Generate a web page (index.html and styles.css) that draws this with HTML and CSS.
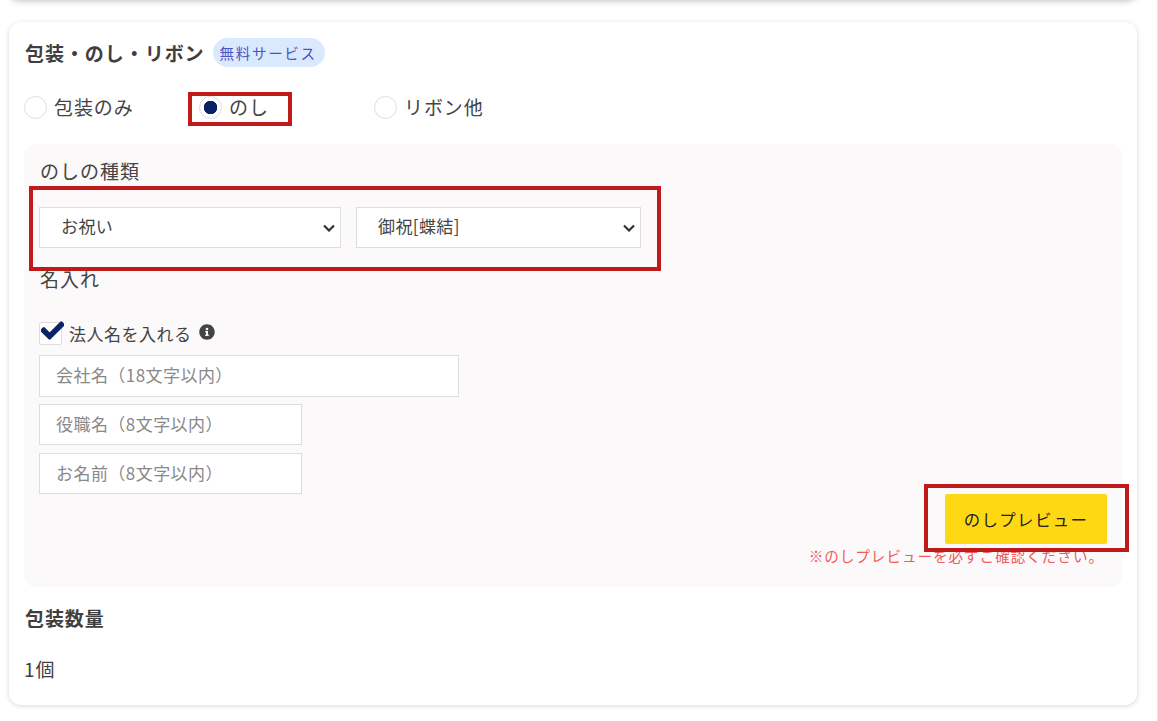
FILE: index.html
```html
<!DOCTYPE html>
<html lang="ja">
<head>
<meta charset="utf-8">
<title>包装・のし・リボン</title>
<link rel="stylesheet" href="styles.css">
</head>
<body>
<div class="prev-card"></div>
<section class="card">
  <div class="title-row">
    <h2 class="title">包装・のし・リボン</h2>
    <span class="badge">無料サービス</span>
  </div>
  <div class="radios">
    <label class="radio r1"><input type="radio" name="wrap"><span>包装のみ</span></label>
    <label class="radio r2"><input type="radio" name="wrap" checked><span>のし</span></label>
    <label class="radio r3"><input type="radio" name="wrap"><span>リボン他</span></label>
  </div>
  <div class="panel">
    <div class="label">のしの種類</div>
    <div class="selects">
      <select class="sel sel-a"><option>お祝い</option></select>
      <select class="sel sel-b"><option>御祝[蝶結]</option></select>
    </div>
    <div class="label name-label">名入れ</div>
    <div class="check-row">
      <span class="check">
        <svg class="tick" viewBox="0 0 512 512"><path d="M173.900 439.400l-166.400-166.400c-10-10-10-26.200 0-36.200l36.200-36.200c10-10 26.200-10 36.200 0L192 312.700 432.100 72.600c10-10 26.200-10 36.200 0l36.200 36.200c10 10 10 26.200 0 36.200l-294.400 294.400c-10 10-26.200 10-36.200 0z"/></svg>
      </span>
      <span class="check-text">法人名を入れる</span>
      <svg class="info" viewBox="0 0 512 512"><path d="M256 8C119 8 8 119 8 256s111 248 248 248 248-111 248-248S393 8 256 8zm0 110c23.200 0 42 18.800 42 42s-18.800 42-42 42-42-18.800-42-42 18.800-42 42-42zm56 254c0 6.600-5.400 12-12 12h-88c-6.600 0-12-5.400-12-12v-24c0-6.600 5.400-12 12-12h12v-64h-12c-6.600 0-12-5.400-12-12v-24c0-6.600 5.400-12 12-12h64c6.600 0 12 5.400 12 12v100h12c6.600 0 12 5.400 12 12v24z"/></svg>
    </div>
    <input class="field field-l" type="text" placeholder="会社名（18文字以内）">
    <input class="field field-s" type="text" placeholder="役職名（8文字以内）">
    <input class="field field-s field-last" type="text" placeholder="お名前（8文字以内）">
    <div class="preview-row">
      <button class="btn" type="button">のしプレビュー</button>
    </div>
    <p class="notice">※のしプレビューを必ずご確認ください。</p>
  </div>
  <h3 class="qty-title">包装数量</h3>
  <p class="qty">1個</p>
</section>
<div class="anno anno-radio"></div>
<div class="anno anno-selects"></div>
<div class="anno anno-btn"></div>
</body>
</html>
```

FILE: styles.css
```css
* { box-sizing: border-box; }
html, body { height: 100%; }
body {
  position: relative;
  margin: 0;
  padding: 0 20px 0 9px;
  background: #fff;
  color: #3f3f3f;
  font-family: "Noto Sans CJK JP", "Noto Sans", sans-serif;
  font-size: 19px;
  overflow: hidden;
  border-right: 1px solid #e6e6e6;
}
.prev-card {
  height: 10px;
  margin-top: -10px;
  margin-bottom: 22px;
  background: #fff;
  border-radius: 0 0 12px 12px;
  box-shadow: 0 1px 6px rgba(0, 0, 0, .25);
}
.card {
  height: 683px;
  padding: 14px 15px 0;
  background: #fff;
  border-radius: 12px;
  box-shadow: 0 1px 5px rgba(0, 0, 0, .16);
}
.title-row { display: flex; align-items: center; height: 34px; padding-left: 1px; }
.title {
  margin: 0;
  font-size: 19px;
  font-weight: 700;
  letter-spacing: .95px;
  line-height: 34px;
}
.badge {
  margin: -2px 0 0 8px;
  height: 29px;
  padding: 0 8px 0 7px;
  border-radius: 15px;
  background: #dbe9ff;
  color: #4a55c0;
  font-size: 14.6px;
  letter-spacing: 1.6px;
  line-height: 29px;
  white-space: nowrap;
}
.radios { display: flex; margin-top: 21px; height: 40px; }
.radio { display: flex; align-items: center; gap: 7px; letter-spacing: .9px; color: #444; height: 32px; }
.radio span { margin-top: -2px; }
.radio input {
  appearance: none;
  width: 23px;
  height: 23px;
  margin: 1px 0 0;
  border: 1px solid #ddd;
  border-radius: 50%;
  background: #fff;
  flex: none;
}
.radio input:checked { background: radial-gradient(circle, #0b2366 0 6.5px, #fff 7px); }
.r1 { width: 175px; }
.r2 { width: 175px; }
.panel {
  position: relative;
  height: 443px;
  margin-top: 13px;
  padding: 12px 15px 0;
  background: #fbf9fa;
  border-radius: 12px;
}
.label { padding-left: 1px; letter-spacing: 1px; line-height: 30px; color: #444; }
.selects { display: flex; gap: 15px; margin-top: 21px; }
.sel {
  appearance: none;
  height: 41px;
  padding: 0 21px 4px;
  background: #fff url("data:image/svg+xml,%3Csvg xmlns='http://www.w3.org/2000/svg' width='12' height='8' viewBox='0 0 12 8'%3E%3Cpath d='M1 1.500l5 5 5-5' fill='none' stroke='%23333' stroke-width='2.200'/%3E%3C/svg%3E") no-repeat right 5px center;
  border: 1px solid #ddd;
  color: #444;
  font-family: inherit;
  font-size: 17px;
  letter-spacing: .4px;
  border-radius: 0;
}
.sel-a { width: 302px; }
.sel-b { width: 285px; }
.name-label { margin-top: 16px; }
.check-row { display: flex; align-items: center; height: 30px; margin-top: 24px; }
.check {
  position: relative;
  width: 23px;
  height: 23px;
  background: #fff;
  border: 1px solid #ddd;
  border-radius: 2px;
  flex: none;
}
.tick { position: absolute; left: 1px; top: -4px; width: 23px; height: 23px; fill: #0b2366; stroke: #0b2366; stroke-width: 24; }
.check-text { margin-left: 7px; font-size: 17px; letter-spacing: .5px; color: #444; }
.info { width: 16px; height: 16px; margin: -2px 0 0 7px; fill: #444; }
.field {
  display: block;
  height: 41px;
  margin-bottom: 8px;
  padding: 0 16px 3px;
  background: #fff;
  border: 1px solid #ddd;
  font-family: inherit;
  font-size: 17px;
  letter-spacing: .45px;
}
.field::placeholder { color: #888; opacity: 1; }
.field-l { width: 420px; height: 42px; margin-top: 7px; margin-bottom: 7px; }
.field-s { width: 263px; }
.field-last { margin-bottom: 0; }
.preview-row { display: flex; justify-content: flex-end; }
.btn {
  display: block;
  width: 162px;
  height: 50px;
  border: 0;
  border-radius: 2px;
  background: #ffd814;
  color: #222;
  font-family: inherit;
  font-size: 16.4px;
  letter-spacing: 1.4px;
}
.notice {
  margin: 0;
  position: absolute;
  right: 18px;
  top: 400px;
  color: #f25a5a;
  font-size: 14.6px;
  letter-spacing: .95px;
  line-height: 24px;
}
.anno { position: absolute; border: 4px solid #c01a1a; }
.anno-radio { left: 188px; top: 92px; width: 104px; height: 34px; }
.anno-selects { left: 29px; top: 186px; width: 632px; height: 85px; }
.anno-btn { left: 924px; top: 484px; width: 205px; height: 68px; }
.qty-title { margin: 16px 0 0 1px; font-size: 19px; font-weight: 700; letter-spacing: .9px; line-height: 30px; }
.qty { margin: 21px 0 0; line-height: 30px; letter-spacing: 1px; }
```
